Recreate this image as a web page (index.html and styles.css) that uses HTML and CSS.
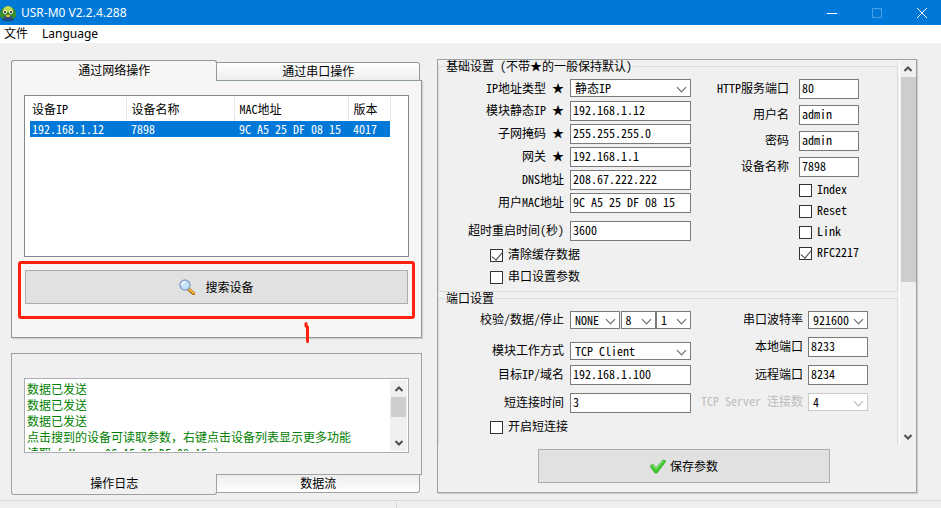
FILE: index.html
```html
<!DOCTYPE html>
<html lang="zh-CN">
<head>
    <meta charset="UTF-8">
    <title>USR-M0 V2.2.4.288</title>
    <meta name="viewport" content="width=device-width, initial-scale=1.0">
    <link rel="stylesheet" href="styles.css">
</head>
<body>
    <header class="titlebar">
        <svg class="logo" viewBox="0 0 16 16">
            <ellipse cx="8" cy="14" rx="6" ry="2" fill="#123e6b"/>
            <path d="M0 10c0-6 3-8 8-8s8 2 8 8c0 3-3 4-8 4s-8-1-8-4z" fill="#3f8f2f"/>
            <path d="M3 5c1-3 3-4 5-4s4 1 5 4l-2 2H5z" fill="#c3d94a"/>
            <circle cx="5" cy="7" r="2" fill="#e9f3d5"/>
            <circle cx="11" cy="7" r="2" fill="#e9f3d5"/>
            <circle cx="5" cy="7" r="1" fill="#222"/>
            <circle cx="11" cy="7" r="1" fill="#222"/>
            <path d="M4 11h8v4H4z" fill="#2c4d8c"/>
            <path d="M6 10h4v2H6z" fill="#e8b23a"/>
        </svg>
        <h1 class="title">USR-M0 V2.2.4.288</h1>
        <div class="window-buttons">
            <button class="window-button" aria-label="最小化"><svg viewBox="0 0 10 10"><path d="M0 5.5h10"/></svg></button>
            <button class="window-button" aria-label="最大化" disabled><svg viewBox="0 0 10 10"><path d="M.5.5h9v9h-9z"/></svg></button>
            <button class="window-button" aria-label="关闭"><svg viewBox="0 0 10 10"><path d="M0 0l10 10M10 0L0 10"/></svg></button>
        </div>
    </header>

    <nav class="menubar">
        <a href="#">文件</a>
        <a href="#">Language</a>
    </nav>

    <main class="main">
        <div class="left">
            <section class="tabs">
                <div class="tab-row" role="tablist">
                    <button class="tab active" role="tab">通过网络操作</button>
                    <button class="tab" role="tab">通过串口操作</button>
                </div>
                <div class="panel search-panel">
                    <div class="device-list">
                        <table>
                            <thead>
                                <tr><th class="col-ip">设备IP</th><th class="col-name">设备名称</th><th class="col-mac">MAC地址</th><th class="col-ver">版本</th></tr>
                            </thead>
                            <tbody>
                                <tr class="selected"><td>192.168.1.12</td><td>7898</td><td>9C A5 25 DF 08 15</td><td>4017</td></tr>
                            </tbody>
                        </table>
                    </div>
                    <div class="search-box">
                        <button class="button search-button">
                            <svg viewBox="0 0 16 16" width="16" height="16">
                                <path d="M10 10.500l4.500 4" stroke="#a8640f" stroke-width="3.500" stroke-linecap="round"/>
                                <path d="M10.500 10.500l4 3.500" stroke="#f5b53c" stroke-width="2" stroke-linecap="round"/>
                                <circle cx="6" cy="6" r="5" fill="#c4e2f8" stroke="#8aa5cc" stroke-width="1.500"/>
                                <path d="M3 6c0-2 1-3 3-3" stroke="#fff" stroke-width="1.500" fill="none"/>
                            </svg>
                            搜索设备
                        </button>
                        <div class="highlight"></div>
                        <svg class="step-mark" viewBox="0 0 6 21"><path d="M2 1.500V4l1.500 1V19.500" fill="none" stroke="#ff2010" stroke-width="3" stroke-linecap="round"/></svg>
                    </div>
                </div>
            </section>

            <section class="tabs tabs-bottom">
                <div class="panel log-panel">
                    <div class="log-box">
                        <textarea class="log" aria-label="操作日志" readonly>数据已发送
数据已发送
数据已发送
点击搜到的设备可读取参数，右键点击设备列表显示更多功能
读取 [ Mac : 9C A5 25 DF 08 15 ]</textarea>
                        <div class="scrollbar">
                            <svg class="arrow" viewBox="0 0 8 6"><path d="M0.500 5L4 1.500 7.500 5"/></svg>
                            <div class="thumb log-thumb"></div>
                            <svg class="arrow down" viewBox="0 0 8 6"><path d="M0.500 1L4 4.500 7.500 1"/></svg>
                        </div>
                    </div>
                </div>
                <div class="tab-row" role="tablist">
                    <button class="tab active" role="tab">操作日志</button>
                    <button class="tab" role="tab">数据流</button>
                </div>
            </section>
        </div>

        <section class="settings">
            <div class="scroll-area">
                <div class="groups">
                    <fieldset class="group">
                        <legend>基础设置 (不带★的一般保持默认)</legend>
                        <div class="columns">
                            <div class="form">
                                <div class="fields">
                                    <label for="ip-type">IP地址类型 ★</label>
                                    <span class="select first"><select id="ip-type"><option>静态IP</option></select></span>
                                    <label for="static-ip">模块静态IP ★</label>
                                    <input type="text" id="static-ip" value="192.168.1.12">
                                    <label for="mask">子网掩码 ★</label>
                                    <input type="text" id="mask" value="255.255.255.0">
                                    <label for="gateway">网关 ★</label>
                                    <input type="text" id="gateway" value="192.168.1.1">
                                    <label for="dns">DNS地址</label>
                                    <input type="text" id="dns" value="208.67.222.222">
                                    <label for="mac">用户MAC地址</label>
                                    <input type="text" id="mac" value="9C A5 25 DF 08 15">
                                </div>
                                <div class="fields">
                                    <label for="timeout">超时重启时间(秒)</label>
                                    <input type="text" id="timeout" value="3600">
                                </div>
                                <div class="checks">
                                    <label><input type="checkbox" checked><span>清除缓存数据</span></label>
                                    <label><input type="checkbox"><span>串口设置参数</span></label>
                                </div>
                            </div>
                            <div class="form form-right">
                                <div class="fields">
                                    <label for="http-port">HTTP服务端口</label>
                                    <input type="text" id="http-port" value="80">
                                    <label for="user">用户名</label>
                                    <input type="text" id="user" value="admin">
                                    <label for="password">密码</label>
                                    <input type="text" id="password" value="admin">
                                    <label for="device-name">设备名称</label>
                                    <input type="text" id="device-name" value="7898">
                                </div>
                                <div class="checks">
                                    <label><input type="checkbox"><span>Index</span></label>
                                    <label><input type="checkbox"><span>Reset</span></label>
                                    <label><input type="checkbox"><span>Link</span></label>
                                    <label><input type="checkbox" checked><span>RFC2217</span></label>
                                </div>
                            </div>
                        </div>
                    </fieldset>

                    <fieldset class="group group-port">
                        <legend>端口设置</legend>
                        <div class="columns">
                            <div class="form">
                                <div class="fields mode-fields">
                                    <label for="parity">校验/数据/停止</label>
                                    <div class="triple">
                                        <span class="select"><select id="parity"><option>NONE</option></select></span>
                                        <span class="select"><select aria-label="数据"><option>8</option></select></span>
                                        <span class="select"><select aria-label="停止"><option>1</option></select></span>
                                    </div>
                                    <label for="mode">模块工作方式</label>
                                    <span class="select"><select id="mode"><option>TCP Client</option></select></span>
                                </div>
                                <div class="fields target-fields">
                                    <label for="target">目标IP/域名</label>
                                    <input type="text" id="target" value="192.168.1.100">
                                    <label for="short-time">短连接时间</label>
                                    <input type="text" id="short-time" value="3">
                                </div>
                                <div class="checks">
                                    <label><input type="checkbox"><span>开启短连接</span></label>
                                </div>
                            </div>
                            <div class="form form-right">
                                <div class="fields">
                                    <label for="baud">串口波特率</label>
                                    <span class="select"><select id="baud"><option>921600</option></select></span>
                                    <label for="local-port">本地端口</label>
                                    <input type="text" id="local-port" value="8233">
                                    <label for="remote-port">远程端口</label>
                                    <input type="text" id="remote-port" value="8234">
                                    <label for="server-count" class="disabled">TCP Server 连接数</label>
                                    <span class="select disabled"><select id="server-count" disabled><option>4</option></select></span>
                                </div>
                            </div>
                        </div>
                    </fieldset>
                </div>
                <div class="scrollbar">
                    <svg class="arrow" viewBox="0 0 8 6"><path d="M0.500 5L4 1.500 7.500 5"/></svg>
                    <div class="thumb settings-thumb"></div>
                    <svg class="arrow down" viewBox="0 0 8 6"><path d="M0.500 1L4 4.500 7.500 1"/></svg>
                </div>
            </div>
            <button class="button save-button">
                <svg viewBox="0 0 16 16" width="16" height="16">
                    <path d="M0 8l3-2 3 4 7-8 3 1-9 12-2 0z" fill="#3fcb2c" stroke="#239a1c" stroke-width="0.600" stroke-linejoin="round"/>
                    <path d="M1.500 8l1.500-1 3 4 7-8" stroke="#8eed78" fill="none"/>
                </svg>
                保存参数
            </button>
        </section>
    </main>

    <footer class="statusbar"><div class="status-left"></div></footer>
</body>
</html>
```

FILE: styles.css
```css
* {
    box-sizing: border-box;
}

body {
    margin: 0;
    min-height: 100vh;
    display: flex;
    flex-direction: column;
    background: #f0f0f0;
    color: #000;
    font: 12px/14px "Noto Sans Mono CJK SC", "Noto Sans CJK SC", monospace;
}

button, input, select, textarea {
    font: inherit;
    color: inherit;
    margin: 0;
}

/* Title bar and menu */
.titlebar {
    display: flex;
    align-items: center;
    height: 25px;
    background: #0078d7;
    color: #fff;
}

.logo {
    width: 16px;
    height: 16px;
}

.title {
    flex: 1;
    margin: 0 0 0 5px;
    font: 12px/16px "Noto Sans", sans-serif;
}

.window-buttons {
    display: flex;
}

.window-button {
    width: 45px;
    height: 25px;
    padding: 0;
    border: none;
    background: none;
}

.window-button:last-child {
    width: 38px;
    margin-left: 4px;
}

.window-button svg {
    display: block;
    width: 10px;
    height: 10px;
    margin: 0 auto;
    fill: none;
    stroke: #fff;
}

.window-button:disabled svg {
    opacity: 0.3;
}

.menubar {
    display: flex;
    gap: 14px;
    height: 18px;
    padding: 0 4px;
    background: #fff;
    font: 12px/18px "Noto Sans", "Noto Sans CJK SC", sans-serif;
}

.menubar a {
    color: #000;
    text-decoration: none;
}

/* Layout */
.main {
    flex: 1;
    display: grid;
    grid-template-columns: 411fr 480fr;
    gap: 15px;
    padding: 17px 24px 5px 11px;
}

.left {
    display: flex;
    flex-direction: column;
    gap: 15px;
}

/* Tabs */
.tabs {
    display: flex;
    flex-direction: column;
}

.tabs-bottom {
    flex: 1;
}

.tab-row {
    display: flex;
    align-items: flex-end;
    padding-right: 2px;
    margin-bottom: -1px;
}

.tab {
    flex: 203;
    height: 19px;
    padding: 0 0 1px;
    border: 1px solid #8f9a9b;
    border-left: none;
    border-radius: 0 3px 0 0;
    background: linear-gradient(#fff, #ededed);
}

.tab.active {
    flex: 206;
    position: relative;
    height: 21px;
    padding-bottom: 2px;
    border-left: 1px solid #8f9a9b;
    border-bottom: none;
    border-radius: 3px 3px 0 0;
    background: #f7f6f4;
}

.panel {
    border: 1px solid #8f9a9b;
    background: #f7f6f4;
    box-shadow: 1px 1px 1px #d0d0d0;
}

.tabs-bottom .tab-row {
    align-items: flex-start;
    margin: -1px 0 0;
}

.tabs-bottom .tab {
    border-color: #a0a0a0;
    border-radius: 0 0 3px 0;
    background: linear-gradient(#ededed, #fff);
}

.tabs-bottom .tab.active {
    border: 1px solid #a0a0a0;
    border-top: none;
    border-radius: 0 0 3px 3px;
    background: #f0f0f0;
}

/* Device list */
.search-panel {
    padding: 14px 12px 33px;
}

.device-list {
    height: 162px;
    padding: 1px 5px;
    border: 1px solid #828790;
    background: #fff;
}

.device-list table {
    border-collapse: collapse;
    table-layout: fixed;
    width: 360px;
}

.device-list th,
.device-list td {
    padding: 0 0 0 2px;
    text-align: left;
    font-weight: normal;
    white-space: nowrap;
}

.device-list th {
    height: 24px;
    border-right: 1px solid #e5e5e5;
}

.device-list th + th,
.device-list td + td {
    padding-left: 5px;
}

.device-list td {
    height: 16px;
}

.col-ip {
    width: 96px;
}

.col-name {
    width: 108px;
}

.col-mac {
    width: 114px;
}

.col-ver {
    width: 42px;
}

.selected {
    background: #0078d7;
    color: #fff;
}

/* Buttons */
.button {
    display: flex;
    align-items: center;
    justify-content: center;
    height: 34px;
    border: 1px solid #adadad;
    background: #e1e1e1;
}

.search-box {
    position: relative;
    margin: 13px 1px 0;
}

.search-button {
    width: 100%;
    gap: 10px;
}

.highlight {
    position: absolute;
    inset: -9px -7px -15px;
    border: 3px solid #ff2010;
    border-radius: 3px;
}

.step-mark {
    position: absolute;
    left: 279px;
    top: 52px;
    width: 6px;
    height: 21px;
}

/* Log */
.log-panel {
    flex: 1;
    padding: 24px 12px 21px;
    border-color: #a0a0a0;
    background: #f0f0f0;
    box-shadow: none;
}

.log-box {
    display: flex;
    height: 75px;
    padding: 1px;
    border: 1px solid #abadb3;
    background: #fff;
}

.log {
    flex: 1;
    min-width: 0;
    padding: 1px;
    border: none;
    outline: none;
    resize: none;
    overflow: hidden;
    white-space: pre;
    line-height: 16px;
    color: #008000;
    background: #fff;
}

/* Scrollbars */
.scrollbar {
    display: flex;
    flex-direction: column;
    align-items: center;
    width: 17px;
    background: #f0f0f0;
}

.arrow {
    width: 8px;
    height: 6px;
    margin: 6px 0 5px;
    fill: none;
    stroke: #505050;
    stroke-width: 2;
}

.arrow.down {
    margin-top: auto;
}

.thumb {
    width: 15px;
    background: #cdcdcd;
}

.log-thumb {
    height: 20px;
}

.settings-thumb {
    height: 205px;
}

/* Settings */
.settings {
    display: flex;
    flex-direction: column;
    margin-bottom: 2px;
    margin-top: -1px;
    border: 1px solid #a0a0a0;
    box-shadow: 1px 1px 1px #d0d0d0;
}

.scroll-area {
    flex: 1;
    display: flex;
}

.groups {
    flex: 1;
    display: flex;
    flex-direction: column;
}

.groups + .scrollbar {
    border-left: 1px solid #fff;
    margin-left: 1px;
}

.group {
    min-width: 0;
    margin: 0;
    padding: 7px 0;
    border: 1px solid #dcdcdc;
}

.group-port {
    flex: 1;
    border-bottom: none;
}

.group legend {
    margin-left: 6px;
    padding: 0 1px;
    line-height: 12px;
}

.columns {
    display: flex;
    justify-content: space-between;
}

.form {
    width: 252px;
}

.fields {
    display: grid;
    grid-template-columns: 1fr 121px;
    gap: 3px 6px;
    margin-bottom: 8px;
}

.fields label {
    align-self: center;
    padding-bottom: 2px;
    text-align: right;
    white-space: nowrap;
}

input[type="text"] {
    width: 100%;
    height: 20px;
    padding: 0 2px 4px;
    border: 1px solid #7a7a7a;
    border-radius: 0;
    outline: none;
    background: #fff;
}

.select {
    position: relative;
    display: block;
    height: 18px;
}

.select.first {
    margin-bottom: 1px;
}

.select select {
    display: block;
    appearance: none;
    width: 100%;
    height: 18px;
    padding: 0 4px 1px;
    border: 1px solid #7a7a7a;
    border-radius: 0;
    background: #fff;
}

.select::after {
    content: "";
    position: absolute;
    right: 6px;
    top: 5px;
    width: 6px;
    height: 6px;
    border: solid #606060;
    border-width: 0 1px 1px 0;
    transform: rotate(45deg);
    pointer-events: none;
}

.select.disabled::after {
    border-color: #b5b5b5;
}

.select.disabled select {
    border-color: #ccc;
    color: #000;
    opacity: 1;
}

.fields .disabled {
    color: #bdbdbd;
}

.triple {
    display: grid;
    grid-template-columns: 50px 35px 35px;
    justify-content: space-between;
}

.mode-fields {
    row-gap: 13px;
    margin-bottom: 5px;
}

.target-fields {
    row-gap: 8px;
}

.checks {
    display: grid;
    gap: 9px;
    padding-left: 51px;
}

.checks label {
    display: flex;
    align-items: center;
    gap: 5px;
    height: 13px;
}

.checks span {
    padding-bottom: 4px;
}

input[type="checkbox"] {
    appearance: none;
    display: flex;
    justify-content: center;
    width: 13px;
    height: 13px;
    border: 1px solid #333;
    background: #fff;
}

input[type="checkbox"]:checked::before {
    content: "";
    width: 5px;
    height: 9px;
    border: solid #444;
    border-width: 0 1px 1px 0;
    transform: rotate(40deg);
}

.form-right {
    width: 166px;
    margin-right: 38px;
}

.form-right .fields {
    grid-template-columns: 1fr 60px;
    gap: 6px 10px;
    margin-bottom: 7px;
}

.form-right .checks {
    gap: 8px;
    padding-left: 106px;
}

.group-port .form-right {
    width: 168px;
    margin-right: 29px;
}

.group-port .form-right .fields {
    gap: 8px 5px;
}

.save-button {
    width: 292px;
    gap: 4px;
    margin: 4px auto 9px 100px;
}

/* Status bar */
.statusbar {
    display: flex;
    height: 8px;
    border-top: 1px solid #d7d7d7;
}

.status-left {
    width: 397px;
    margin-top: 1px;
    border-right: 1px solid #d7d7d7;
}
```
